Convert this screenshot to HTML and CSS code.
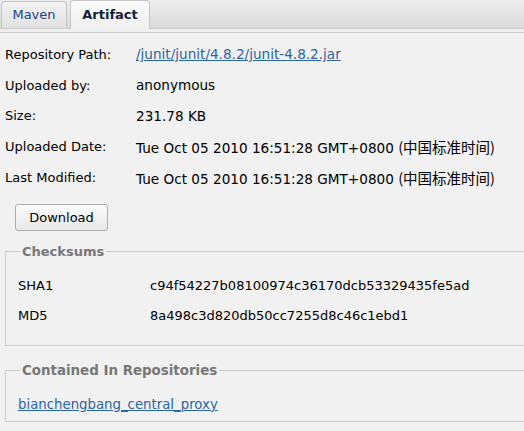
FILE: index.html
```html
<!DOCTYPE html>
<html>
<head>
<meta charset="utf-8">
<link rel="stylesheet" href="styles.css">
</head>
<body>
<div class="tabbar">
  <div class="tab">Maven</div>
  <div class="tab active">Artifact</div>
</div>
<div class="strip"></div>
<div class="panel">
  <div class="props">
    <div class="label">Repository Path:</div><div class="value"><a href="#">/junit/junit/4.8.2/junit-4.8.2.jar</a></div>
    <div class="label">Uploaded by:</div><div class="value">anonymous</div>
    <div class="label">Size:</div><div class="value">231.78 KB</div>
    <div class="label">Uploaded Date:</div><div class="value">Tue Oct 05 2010 16:51:28 GMT+0800 <span class="cjk">(中国标准时间)</span></div>
    <div class="label">Last Modified:</div><div class="value">Tue Oct 05 2010 16:51:28 GMT+0800 <span class="cjk">(中国标准时间)</span></div>
  </div>
  <button class="btn">Download</button>
  <fieldset class="group checksums">
    <legend>Checksums</legend>
    <div class="sums">
      <div>SHA1</div><div>c94f54227b08100974c36170dcb53329435fe5ad</div>
      <div>MD5</div><div>8a498c3d820db50cc7255d8c46c1ebd1</div>
    </div>
  </fieldset>
  <fieldset class="group repos">
    <legend>Contained In Repositories</legend>
    <a href="#">bianchengbang_central_proxy</a>
  </fieldset>
</div>
</body>
</html>
```
FILE: styles.css
```css
html, body {
  margin: 0;
  padding: 0;
  background: #f1f1f1;
  overflow: hidden;
  width: 524px;
  height: 431px;
}
body {
  font-family: "DejaVu Sans", "Noto Sans CJK SC", sans-serif;
  font-size: 12px;
  color: #000;
}
.tabbar {
  height: 28px;
  background: linear-gradient(#eeeeee, #dadada);
  border-bottom: 1px solid #cccccc;
  display: flex;
  align-items: flex-end;
  padding-left: 1px;
  gap: 3px;
}
.tab {
  height: 26px;
  line-height: 26px;
  padding: 0 10px;
  border: 1px solid #c6c6c6;
  border-bottom: none;
  border-radius: 4px 4px 0 0;
  background: linear-gradient(#f3f3f3, #e1e1e1);
  color: #15428b;
  font-size: 13px;
  width: 44px;
  text-align: center;
}
.tab.active {
  font-weight: bold;
  color: #15223b;
  background: linear-gradient(#fbfbfb, #efefef);
  height: 28px;
  margin-bottom: -1px;
  width: 58px;
  line-height: 28px;
}
.strip {
  height: 3px;
  background: #efefef;
  border-bottom: 1px solid #cacaca;
}
.panel {
  padding: 6px 0 0 5px;
}
.props {
  display: grid;
  grid-template-columns: 131px auto;
  grid-auto-rows: 30.75px;
  align-items: center;
  font-size: 13px;
}
.value {
  font-size: 13.6px;
  white-space: nowrap;
}
.cjk {
  font-family: "Noto Sans CJK SC", sans-serif;
  font-size: 14.5px;
}
a {
  color: #2a63a6;
}
.btn {
  margin: 11px 0 0 10px;
  width: 93px;
  height: 27px;
  font-family: inherit;
  font-size: 13px;
  color: #000;
  background: linear-gradient(#fbfbfb, #e8e8e8);
  border: 1px solid #adadad;
  border-radius: 3px;
  padding: 0;
}
.group {
  border: 1px solid #cccccc;
  border-right: none;
  margin: 13px 0 0 0;
  padding: 0 0 0 12px;
  width: 507px;
}
.group legend {
  color: #777;
  font-weight: bold;
  font-size: 13px;
  padding: 0 2px;
  margin-left: 2px;
}
.repos legend {
  font-size: 13.4px;
}
.sums {
  display: grid;
  grid-template-columns: 132px auto;
  grid-auto-rows: 30px;
  align-items: center;
  font-size: 13px;
  padding: 12px 0 14px 0;
}
.repos {
  margin-top: 17px;
  padding-top: 19px;
  padding-bottom: 9px;
  font-size: 13.3px;
}
```
